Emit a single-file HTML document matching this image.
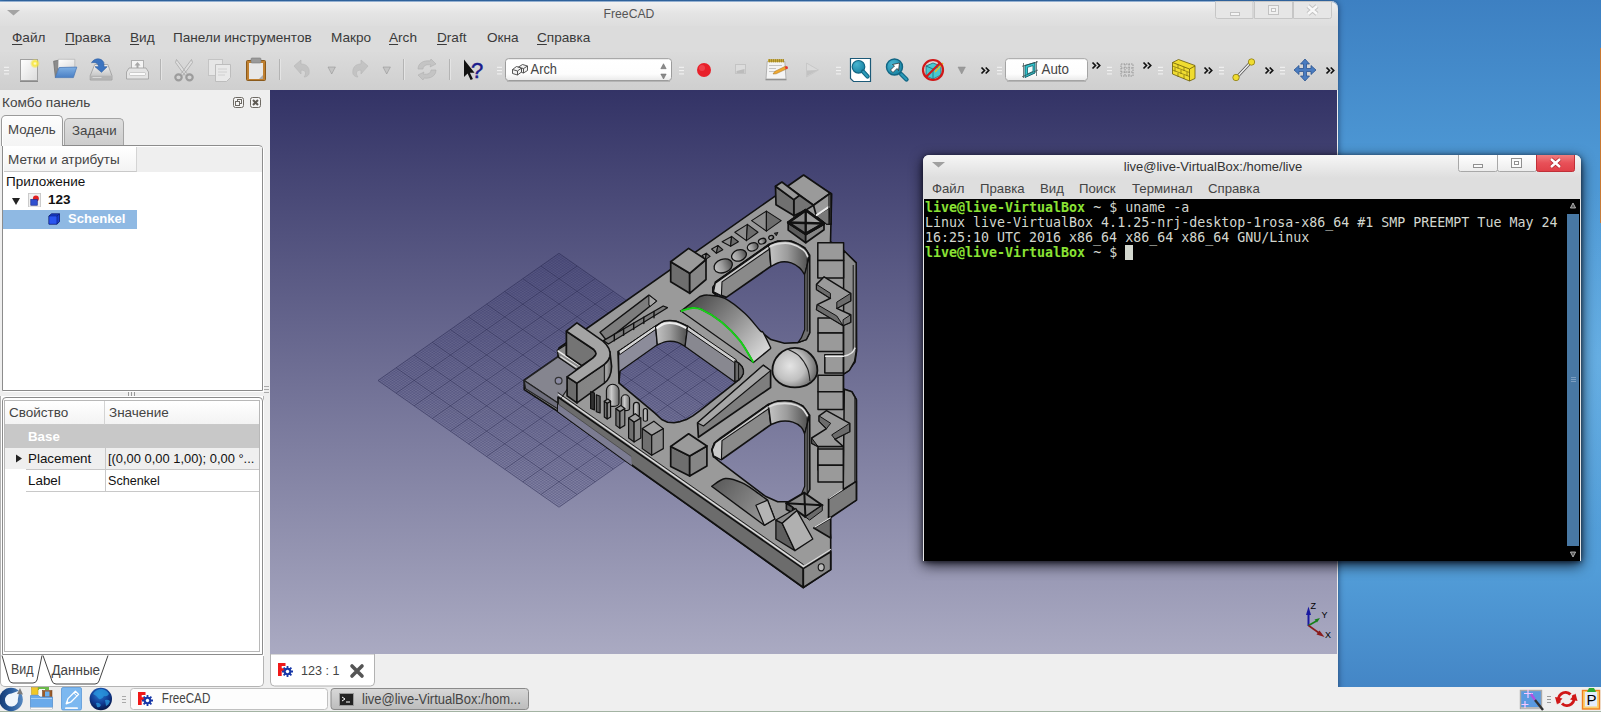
<!DOCTYPE html>
<html lang="ru">
<head>
<meta charset="utf-8">
<title>FreeCAD</title>
<style>
*{box-sizing:border-box;margin:0;padding:0}
html,body{width:1601px;height:712px;overflow:hidden}
body{position:relative;font-family:"Liberation Sans","DejaVu Sans",sans-serif;font-size:13px;color:#333;background:#4a90d2}
.abs{position:absolute}
#desk{position:absolute;left:0;top:0;width:1601px;height:712px;background:linear-gradient(180deg,#3d80c2 0%,#4c96d3 21%,#55a1da 50%,#529dd8 80%,#4486c6 96.5%,#4486c6 100%)}
/* FreeCAD window */
#fc{position:absolute;left:0;top:1px;width:1338px;height:690px;background:#efefef;border-radius:0 7px 0 0;box-shadow:0 0 6px rgba(0,0,30,.55)}
#fctitle{position:absolute;left:0;top:0;width:1338px;height:25px;border-radius:0 7px 0 0;box-shadow:inset 0 1px 0 rgba(70,120,180,.55);background:linear-gradient(180deg,#f2f2f2 0%,#e4e4e4 50%,#dedede 100%)}
#fctitle .t{position:absolute;left:0;width:1258px;top:4.500px;text-align:center;font-size:13.2px;color:#555;transform:scaleX(.925)}
#fcmenu{position:absolute;left:0;top:25px;width:1338px;height:26px;background:#dcdcdc}
#fcmenu span{position:absolute;top:4px;font-size:13.6px;color:#3a3a3a;white-space:nowrap}
#fcmenu u{text-decoration:underline;text-underline-offset:2px}
#fctool{position:absolute;left:0;top:51px;width:1338px;height:38px;background:linear-gradient(180deg,#dbdbdb,#cfcfcf)}
#view{position:absolute;left:270px;top:90px;width:1067px;height:564.400px;background:linear-gradient(180deg,#333366 0%,#aaaac2 100%);overflow:hidden}
#left{position:absolute;left:0;top:90px;width:270px;height:597px;background:#efefef}
#tabbar3d{position:absolute;left:270px;top:654px;width:1068px;height:33px;background:#efefef}
/* taskbar */
#task{position:absolute;left:0;top:687px;width:1601px;height:25px;background:#efefef}
/* terminal */
#term{position:absolute;left:923px;top:155px;width:658px;height:406px;background:#e6e6e6;border-radius:6px 6px 0 0;box-shadow:0 4px 14px rgba(0,0,10,.8),0 1px 5px rgba(0,0,10,.6)}
#termtitle{position:absolute;left:0;top:0;width:658px;height:23px;border-radius:6px 6px 0 0;background:linear-gradient(180deg,#f6f6f6,#dedede)}
#termtitle .t{position:absolute;left:0;width:580px;top:4px;text-align:center;font-size:13px;color:#333}
#termmenu{position:absolute;left:0;top:23px;width:658px;height:21px;background:#dedede}
#termmenu span{position:absolute;top:3px;font-size:13.2px;color:#444;white-space:nowrap}
#termbody{position:absolute;left:1px;top:44px;width:656px;height:362px;padding-left:1px;padding-top:1px;background:#000;font-family:"DejaVu Sans Mono","Liberation Mono",monospace;font-size:13.3px;line-height:15px;color:#d3d7cf;white-space:pre}
#termbody b{color:#8ae234;font-weight:bold}
#termbody .c{color:#d3d7cf}

/* left panel */
#left .ttl{position:absolute;left:2px;top:5px;font-size:13.6px;color:#444}
.dbtn{position:absolute;top:7px;width:11px;height:11px;border:1px solid #6e6a64;border-radius:2.5px;background:#f4f4f4}
.tabm{position:absolute;left:1px;top:25px;width:62px;height:31px;background:linear-gradient(180deg,#fdfdfd,#f4f4f4);border:1px solid #9a9a9a;border-bottom:none;border-radius:5px 5px 0 0;font-size:13.3px;color:#444;padding:6px 0 0 6px;box-shadow:inset 1px 1px 0 #fff}
.tabz{position:absolute;left:64px;top:28px;width:60px;height:27px;background:linear-gradient(180deg,#dedede,#cdcdcd);border:1px solid #a4a4a4;border-bottom:none;border-radius:5px 5px 0 0;font-size:13.3px;color:#444;padding:4px 0 0 7px}
.pane1{position:absolute;left:2px;top:55px;width:261px;height:246px;border:1px solid #8c8c8c;border-radius:0 4px 0 0;background:#fff;box-shadow:inset 1px 1px 0 #fff,1px 1px 0 #fff}
.hdr{position:absolute;background:linear-gradient(180deg,#ffffff,#f3f3f3);font-size:13.5px;color:#444;border-bottom:1px solid #c9c9c9;border-right:1px solid #d4d4d4}
.tree{font-size:13.5px;color:#111}
.pane2{position:absolute;left:0;top:306px;width:264px;height:291px;background:#fff;border:1px solid #b4b4b4;border-top:none;border-radius:0 0 5px 5px}
.pframe{position:absolute;left:2px;top:307px;width:261px;height:258px;border:1px solid #8c8c8c;border-radius:4px 4px 0 0;background:#fff;box-shadow:inset 1px 1px 0 #fff,1px 1px 0 #fff}
.pinner{position:absolute;left:1px;top:2px;width:256px;height:252px;border:1px solid #b8b8b8;background:#fff}
.prow{position:absolute;left:0;width:253px;font-size:13.5px;color:#111}
</style>
</head>
<body>
<div id="desk"><div class="abs" style="left:1600px;top:48px;width:1px;height:175px;background:#c87832"></div><div class="abs" style="left:1500px;top:180px;width:101px;height:360px;background:radial-gradient(ellipse 70px 170px at 100% 50%,rgba(130,195,240,.38),rgba(130,195,240,0))"></div></div>
<div id="fc">
  <div id="fctitle"><div class="t">FreeCAD</div><svg class="abs" style="left:0;top:0" width="1338" height="25" viewBox="0 1 1338 25">
<path d="M7 10h13l-6.500 5.500z" fill="#a4a4a4"/>
<g fill="#e6e6e6" stroke="#c6c6c6"><path d="M1215.500 1.500v15q0 2 2 2h35.500v-17z"/><path d="M1254.500 1.500h38v17h-38z"/><path d="M1293.500 1.500h38v15q0 2-2 2h-36z"/></g>
<rect x="1230.500" y="12.500" width="9" height="3" fill="#f4f4f4" stroke="#c2c2c2"/>
<rect x="1268.500" y="5.500" width="10" height="9" fill="#f0f0f0" stroke="#c2c2c2"/><rect x="1271.500" y="8.500" width="4" height="3" fill="#f8f8f8" stroke="#c2c2c2"/>
<path d="M1308 6l9 8M1317 6l-9 8" stroke="#c2c2c2" stroke-width="4.400"/><path d="M1308 6l9 8M1317 6l-9 8" stroke="#f8f8f8" stroke-width="2.600"/>
</svg></div>
  <div id="fcmenu">
    <span style="left:12px"><u>Ф</u>айл</span>
    <span style="left:65px"><u>П</u>равка</span>
    <span style="left:130px"><u>В</u>ид</span>
    <span style="left:173px">Панели инструментов</span>
    <span style="left:331px">Макро</span>
    <span style="left:389px"><u>A</u>rch</span>
    <span style="left:437px"><u>D</u>raft</span>
    <span style="left:487px">Окна</span>
    <span style="left:537px"><u>С</u>правка</span>
  </div>
  <div id="fctool"><svg class="abs" style="left:0;top:0" width="1338" height="38" viewBox="0 52 1338 38"><g stroke="#f4f4f4" stroke-width="1"><path d="M4 67.300h5M4 70.600h5M4 73.900h5"/></g><defs><linearGradient id="gpap" x1="0" y1="0" x2="1" y2="1"><stop offset="0" stop-color="#fff"/><stop offset="1" stop-color="#dcdcdc"/></linearGradient><radialGradient id="gglow"><stop offset="0" stop-color="#fffbe0"/><stop offset=".45" stop-color="#f8e840"/><stop offset="1" stop-color="#f4e020" stop-opacity="0"/></radialGradient><linearGradient id="gfold" x1="0" y1="0" x2="0" y2="1"><stop offset="0" stop-color="#7fb0e4"/><stop offset="1" stop-color="#4a7fc4"/></linearGradient><linearGradient id="gdrv" x1="0" y1="0" x2="0" y2="1"><stop offset="0" stop-color="#f2f2f2"/><stop offset="1" stop-color="#b8b8b8"/></linearGradient></defs><rect x="20.5" y="59.5" width="17" height="21" fill="url(#gpap)" stroke="#a0a0a0"/><path d="M20 81.5h18" stroke="#8a8a8a"/><circle cx="35" cy="63.5" r="5" fill="url(#gglow)"/><path d="M53.600 61.200l4.600-.9l-.2 8l-2.600 9.300z" fill="#8c8c8c" stroke="#6a6a6a" stroke-width=".7"/><path d="M58.300 59.300h16.500v9h-16.800z" fill="url(#gpap)" stroke="#a8a8a8" stroke-width=".6"/><path d="M59.200 67.500l17.600-.4l-3.400 10.500h-18z" fill="url(#gfold)" stroke="#4a78b8" stroke-width=".8"/><path d="M94.700 64.500h13.100l4.200 11.200v4.300h-21.800v-4.300z" fill="url(#gdrv)" stroke="#9a9a9a" stroke-width=".8"/><path d="M90.600 75.700h21v3.800h-21z" fill="#b4b4b4"/><path d="M92.500 77.500h9" stroke="#d8d8d8" stroke-width="1"/><path d="M91.500 62.800c2.500-4.800 9.500-5.600 12.300-.4l.2 4.300h3.200l-5.700 5.600l-6.500-5.600h3.400c.2-3.400-3.500-5-6.900-3.900z" fill="#3c74c0" stroke="#2c5ca0" stroke-width=".6"/><rect x="131.500" y="60.500" width="12" height="9" fill="#f4f4f4" stroke="#b0b0b0"/><path d="M137.500 62l3 3.500h-2v3h-2v-3h-2z" fill="#a8a8a8"/><path d="M129 68h17l2.500 4v7h-22v-7z" fill="#e4e4e4" stroke="#a4a4a4" stroke-width=".9"/><rect x="129.500" y="72.500" width="16" height="3" rx="1" fill="#fafafa" stroke="#b4b4b4" stroke-width=".6"/><path d="M160.5 59V80" stroke="#b4b4b4"/><path d="M161.5 59V80" stroke="#e4e4e4"/><path d="M176.500 59.500l11.500 15.500h-3.500l-9-12.500zM191.500 59.500l-11.500 15.500h3.500l9-12.500z" fill="#dedede" stroke="#a8a8a8" stroke-width=".8"/><g fill="none" stroke="#9c9c9c" stroke-width="2.200"><ellipse cx="178.500" cy="77.300" rx="3.200" ry="3"/><ellipse cx="189.500" cy="77.300" rx="3.200" ry="3"/></g><rect x="208.500" y="59.500" width="14" height="16" fill="#e6e6e6" stroke="#c4c4c4"/><path d="M215.500 64.500h15v13l-4 4h-11z" fill="#e9e9e9" stroke="#bdbdbd"/><path d="M218 69h9M218 72h9M218 75h7" stroke="#d0d0d0"/><rect x="246.500" y="60.500" width="19" height="20" rx="1" fill="#c08030" stroke="#8a5a1c"/><rect x="249" y="63" width="14" height="16" fill="#e8e8e8"/><rect x="251" y="58" width="10" height="5" rx="1" fill="#9a9a9a" stroke="#7a7a7a" stroke-width=".6"/><path d="M263 75v4h-4z" fill="#aaa"/><path d="M279.5 59V80" stroke="#b4b4b4"/><path d="M280.5 59V80" stroke="#e4e4e4"/><g fill="#c2c2c2" stroke="#b4b4b4" stroke-width=".6" opacity=".9"><path d="M294 66l7-6v4c6 0 9 4 8 10c-1 2-3 3-5 3c2-2 3-7-3-7v4z"/><path d="M368 66l-7-6v4c-6 0-9 4-8 10c1 2 3 3 5 3c-2-2-3-7 3-7v4z"/></g><path d="M328.0 67.0h7.400l-3.700 7z" fill="#c4c4c4" stroke="#8c8c8c" stroke-width=".5"/><path d="M383.0 67.0h7.400l-3.700 7z" fill="#c4c4c4" stroke="#8c8c8c" stroke-width=".5"/><path d="M403.5 59V80" stroke="#b4b4b4"/><path d="M404.5 59V80" stroke="#e4e4e4"/><g fill="#c4c4c4" stroke="#b0b0b0" stroke-width=".6"><path d="M418 69c0-6 6-9 12-8l1-2l5 5l-6 3l1-2c-5-1-8 1-8 4z"/><path d="M436 70c0 6-6 9-12 8l-1 2l-5-5l6-3l-1 2c5 1 8-1 8-4z"/></g><path d="M449.5 59V80" stroke="#b4b4b4"/><path d="M450.5 59V80" stroke="#e4e4e4"/><path d="M464 59.500v17.500l3.600-3.400l3 6.400l2.300-1l-3-6.300h4.600z" fill="#111"/><text x="471" y="78" font-size="22" fill="#1c1c8c" stroke="#1c1c8c" stroke-width=".5" font-family="Liberation Sans, sans-serif">?</text><g stroke="#f4f4f4" stroke-width="1"><path d="M497 67.300h5M497 70.600h5M497 73.900h5"/></g><defs><linearGradient id="gcmb" x1="0" y1="0" x2="0" y2="1"><stop offset="0" stop-color="#fff"/><stop offset=".7" stop-color="#fdfdfd"/><stop offset="1" stop-color="#eaeaea"/></linearGradient></defs><rect x="505.500" y="58.700" width="166" height="21.800" rx="3" fill="url(#gcmb)" stroke="#9c9c9c"/><path d="M507 81.500h163" stroke="#b4b4b4"/><g fill="#f2f2f2" stroke="#444" stroke-width=".9" stroke-linejoin="round"><path d="M512.500 69.500l4-3l5 1.500v4l-4 3l-5-1.500z"/><path d="M512.500 69.500l5 1.500l4-3M517.500 71v4" fill="none"/><path d="M518.500 67l4-2.500l5 1.500v4.500l-4 2.500l-2-.6v-4.400z"/><path d="M521.500 68l2 .6l4-2.600M523.500 68.600v4.400" fill="none"/></g><text x="530.600" y="74.300" font-size="14" fill="#444" textLength="26.400" lengthAdjust="spacingAndGlyphs" font-family="Liberation Sans, sans-serif">Arch</text><path d="M660.800 68.700h5.400l-2.700-5z M660.800 74h5.400l-2.700 5z" fill="#8a8a8a" stroke="#666" stroke-width=".5"/><g stroke="#f4f4f4" stroke-width="1"><path d="M679 67.300h5M679 70.600h5M679 73.900h5"/></g><circle cx="704" cy="70" r="7" fill="#e8202a"/><circle cx="702" cy="68" r="3" fill="#f25058" opacity=".7"/><rect x="735.500" y="64.500" width="10" height="9" fill="#dcdcdc" stroke="#c4c4c4"/><path d="M736.500 71l8-2v4h-8z" fill="#bcbcbc"/><path d="M767.200 61.500h17.600l1.200 17.500h-20z" fill="#f4f4f4" stroke="#a4a4a4" stroke-width=".8"/><path d="M768 59.200h16v3h-16z" fill="#c8a838"/><path d="M769.500 59v3.400M771.500 59v3.400M773.500 59v3.400M775.500 59v3.400M777.500 59v3.400M779.500 59v3.400M781.500 59v3.400M783.500 59v3.400" stroke="#8a7420" stroke-width=".6"/><path d="M769 65.500h13M769 68.500h7M769 71.500h9" stroke="#c4c4c4"/><path d="M773 74l1.800-2.600l11-5.400l1.400 2.600l-11 5.200z" fill="#f0a830" stroke="#9a6a1c" stroke-width=".5"/><circle cx="786.500" cy="67.700" r="1.400" fill="#e83030"/><path d="M765.500 79.700h21" stroke="#8c8c8c" stroke-width="1.200"/><path d="M806.500 63l12 7l-12 7z" fill="#dadada" stroke="#c4c4c4" stroke-width=".8"/><path d="M807 70.500l11 -.5l-11 6z" fill="#c2c2c2"/><g stroke="#f4f4f4" stroke-width="1"><path d="M836 67.300h5M836 70.600h5M836 73.900h5"/></g><path d="M850.500 58.500h20v23h-17l-3-3z" fill="#fff" stroke="#1c5a78" stroke-width="1.200"/><defs><radialGradient id="glens" cx=".35" cy=".3" r=".8"><stop offset="0" stop-color="#48b4d0"/><stop offset="1" stop-color="#1480a0"/></radialGradient></defs><circle cx="858.500" cy="66.800" r="6.300" fill="url(#glens)" stroke="#126684" stroke-width="1.200"/><path d="M863 71.500l4.600 5" stroke="#126684" stroke-width="4.200" stroke-linecap="round"/><path d="M863.300 71.800l4.200 4.600" stroke="#2a9ab8" stroke-width="2.200" stroke-linecap="round"/><circle cx="894.500" cy="67" r="8" fill="url(#glens)" stroke="#126684" stroke-width="1.400"/><path d="M901 74l5.500 5.500" stroke="#126684" stroke-width="4.400" stroke-linecap="round"/><path d="M901.300 74.300l5 5" stroke="#2a9ab8" stroke-width="2.200" stroke-linecap="round"/><path d="M899.500 63l-7 1.500l2 1.500l-4 4l2.500 2.500l4-4l1.500 2z" fill="#fff" stroke="#222" stroke-width=".7"/><path d="M926 66l7-3l8 3v9l-8 4l-7-3z" fill="#48c8d0" stroke="#1a6a78" stroke-width=".8"/><path d="M926 66l7 3l8-3M933 69v10" fill="none" stroke="#1a6a78" stroke-width=".8"/><path d="M935 72l8-9" stroke="#e8c020" stroke-width="1.500"/><circle cx="933" cy="70" r="10" fill="none" stroke="#d01818" stroke-width="2.200"/><path d="M940 63L926 77" stroke="#d01818" stroke-width="2.200"/><path d="M958.0 67.0h7.400l-3.700 7z" fill="#9a9a9a" stroke="#8c8c8c" stroke-width=".5"/><path d="M981.5 67.5l3 3l-3 3M985.7 67.5l3 3l-3 3" fill="none" stroke="#111" stroke-width="1.700"/><g stroke="#f4f4f4" stroke-width="1"><path d="M997 67.300h5M997 70.600h5M997 73.900h5"/></g><rect x="1005.500" y="58.700" width="82" height="21.800" rx="3" fill="url(#gcmb)" stroke="#a4a4a4"/><path d="M1007 81.500h79" stroke="#b4b4b4"/><path d="M1025 65.500l10-3v10.500l-10 4.500z" fill="#30c8d0" stroke="#14606c" stroke-width="1"/><path d="M1027.500 67.300l5.500-1.700v5.800l-5.500 2.500z" fill="#f4fcfc" stroke="#14606c" stroke-width=".8"/><path d="M1023.500 63v15M1036.500 61v15M1022 66.300l16-4.600M1022 76.800l16-6.800" stroke="#3a4a4c" stroke-width=".7" fill="none"/><text x="1041.500" y="74.300" font-size="14" fill="#444" textLength="27.500" lengthAdjust="spacingAndGlyphs" font-family="Liberation Sans, sans-serif">Auto</text><path d="M1092.5 62.5l3 3l-3 3M1096.7 62.5l3 3l-3 3" fill="none" stroke="#111" stroke-width="1.700"/><g stroke="#f4f4f4" stroke-width="1"><path d="M1107 67.300h5M1107 70.600h5M1107 73.900h5"/></g><g fill="none" stroke="#909090" stroke-width=".9" stroke-dasharray="1.500 1"><rect x="1121" y="64" width="12" height="12"/><path d="M1125 64v12M1129 64v12M1121 68h12M1121 72h12"/></g><path d="M1143.5 62.5l3 3l-3 3M1147.7 62.5l3 3l-3 3" fill="none" stroke="#111" stroke-width="1.700"/><g stroke="#f4f4f4" stroke-width="1"><path d="M1158 67.300h5M1158 70.600h5M1158 73.900h5"/></g><g stroke="#6a5c08" stroke-width=".8"><path d="M1172.500 62.500l6-3l16.500 6v13l-5.500 2.500l-17-7z" fill="#f0dc30"/><path d="M1172.500 62.500l17 6.500l5.500-3M1189.500 69v12" fill="none"/><path d="M1172.500 66l17 6.500M1172.500 70l17 6.500M1178 64.500v4M1184 67v4M1175 67.500v4M1181 70v4M1187 72v4M1178 73v4M1184 75v4" fill="none" stroke-width=".6"/></g><path d="M1204.5 67.5l3 3l-3 3M1208.7 67.5l3 3l-3 3" fill="none" stroke="#111" stroke-width="1.700"/><g stroke="#f4f4f4" stroke-width="1"><path d="M1219 67.300h5M1219 70.600h5M1219 73.900h5"/></g><path d="M1237 77l14-15" stroke="#555" stroke-width="3"/><path d="M1237 77l14-15" stroke="#f4f4f4" stroke-width="1.400"/><circle cx="1236" cy="77.500" r="3.200" fill="#f0dc30" stroke="#8a7a10" stroke-width=".8"/><circle cx="1251.500" cy="62" r="3.200" fill="#f0dc30" stroke="#8a7a10" stroke-width=".8"/><path d="M1265.5 67.5l3 3l-3 3M1269.7 67.5l3 3l-3 3" fill="none" stroke="#111" stroke-width="1.700"/><g stroke="#f4f4f4" stroke-width="1"><path d="M1280 67.300h5M1280 70.600h5M1280 73.900h5"/></g><path d="M1305 59l4.500 5h-3v4.500h4.500v-3l5 4.500l-5 4.500v-3h-4.500v4.500h3l-4.500 5l-4.500-5h3v-4.500h-4.500v3l-5-4.500l5-4.500v3h4.500v-4.500h-3z" fill="#4a7cc0" stroke="#2c5490" stroke-width=".8"/><path d="M1326.5 67.5l3 3l-3 3M1330.7 67.5l3 3l-3 3" fill="none" stroke="#111" stroke-width="1.700"/></svg></div>
</div>
<div id="left">
  <div class="ttl">Комбо панель</div>
  <div class="dbtn" style="left:233px"><svg width="9" height="9" viewBox="0 0 9 9" style="position:absolute;left:0;top:0"><rect x="3.5" y="1.5" width="4" height="4" fill="none" stroke="#6e6a64"/><rect x="1.5" y="3.5" width="4" height="4" fill="#f4f4f4" stroke="#6e6a64"/></svg></div>
  <div class="dbtn" style="left:250px"><svg width="9" height="9" viewBox="0 0 9 9" style="position:absolute;left:0;top:0"><path d="M2 2L7 7M7 2L2 7" stroke="#5e5a54" stroke-width="2"/></svg></div>
  <div class="tabz">Задачи</div>
  <div class="pane1">
    <div class="hdr" style="left:1px;top:1px;width:133px;height:25px;padding:5px 0 0 4px">Метки и атрибуты</div>
    <div class="abs" style="left:134px;top:1px;width:125px;height:25px;background:#efefef"></div>
    <div class="tree">
      <div class="abs" style="left:3px;top:28px">Приложение</div>
      <svg class="abs" style="left:8px;top:50px" width="10" height="10" viewBox="0 0 10 10"><path d="M1 2H9L5 9Z" fill="#222"/></svg>
      <svg class="abs" style="left:25px;top:46.500px" width="13" height="14.500" viewBox="0 0 14 16" preserveAspectRatio="none"><rect x=".5" y=".5" width="13" height="15" fill="#f0f0f0" stroke="#c8c8c8"/><circle cx="8.5" cy="6" r="3.2" fill="#e02020"/><rect x="3" y="7" width="7" height="6.5" fill="#3050d0" stroke="#18288a" stroke-width=".7"/></svg>
      <div class="abs" style="left:45px;top:46px;font-weight:bold">123</div>
      <div class="abs" style="left:0;top:64px;width:134px;height:18.600px;background:#8fb9e3"></div>
      <svg class="abs" style="left:44.500px;top:67px" width="12.500" height="12" viewBox="0 0 14 14" preserveAspectRatio="none"><path d="M1 3.5L4 1H13V10L10 13H1Z" fill="#1a3fd0" stroke="#0c1c70" stroke-width="1"/><path d="M1 3.5H10V13M10 3.5L13 1" fill="none" stroke="#0c1c70" stroke-width=".8"/><rect x="1.5" y="4" width="8" height="8.5" fill="#2a55f0"/></svg>
      <div class="abs" style="left:65px;top:65px;font-weight:bold;color:#fff;transform:scaleX(.97);transform-origin:0 0">Schenkel</div>
    </div>
  </div>
  <div class="tabm">Модель</div>
  <div class="abs" style="left:128px;top:302px;width:9px;height:4px;background:repeating-linear-gradient(90deg,#999 0 1px,transparent 1px 3px)"></div>
  <div class="pane2"></div>
  <div class="pframe"><div class="pinner">
    <div class="hdr" style="left:0;top:0;width:100px;height:24px;padding:4px 0 0 4px">Свойство</div>
    <div class="hdr" style="left:100px;top:0;width:154px;height:24px;padding:4px 0 0 4px;border-right:none">Значение</div>
    <div class="abs" style="left:0;top:24px;width:254px;height:23px;background:#c8c8c8"></div>
    <div class="abs" style="left:23px;top:28px;font-size:13.3px;font-weight:bold;color:#fff">Base</div>
    <div class="abs" style="left:0;top:47px;width:254px;height:21px;background:#efefef"></div>
    <svg class="abs" style="left:10px;top:53px" width="8" height="9" viewBox="0 0 8 9"><path d="M1 0.5L7 4.5L1 8.5Z" fill="#222"/></svg>
    <div class="abs" style="left:23px;top:50px;font-size:13.4px;color:#111">Placement</div>
    <div class="abs" style="left:103px;top:50px;font-size:12.9px;color:#111;white-space:nowrap">[(0,00 0,00 1,00); 0,00 °...</div>
    <div class="abs" style="left:23px;top:72px;font-size:13.4px;color:#111">Label</div>
    <div class="abs" style="left:103px;top:72px;font-size:13.4px;color:#111;transform:scaleX(.94);transform-origin:0 0">Schenkel</div>
    <div class="abs" style="left:21px;top:68px;width:233px;height:1px;background:#c8c8c8"></div>
    <div class="abs" style="left:21px;top:90px;width:233px;height:1px;background:#c8c8c8"></div>
    <div class="abs" style="left:100px;top:47px;width:1px;height:44px;background:#c8c8c8"></div>
  </div></div>
  <svg class="abs" style="left:0;top:564px" width="120" height="32" viewBox="0 0 120 32">
    <path d="M2 1.5L9 26Q10 29 13 29H33Q36 29 37 26L42 1.5" fill="#fff" stroke="#444" stroke-width="1"/>
    <path d="M43 1.5L52 27Q53 30 56 30H95Q98 30 99 27L108 1.5" fill="#fff" stroke="#444" stroke-width="1"/>
    <text x="11" y="20" font-size="14" fill="#444" textLength="22.500" lengthAdjust="spacingAndGlyphs" font-family="Liberation Sans, sans-serif">Вид</text>
    <text x="51.500" y="21" font-size="14" fill="#444" textLength="48.500" lengthAdjust="spacingAndGlyphs" font-family="Liberation Sans, sans-serif">Данные</text>
  </svg>
  <div class="abs" style="left:264px;top:296px;width:5px;height:7px;background:repeating-linear-gradient(180deg,#aaa 0 1px,transparent 1px 3px)"></div>
</div>
<div id="view"><svg class="abs" style="left:0;top:0" width="1067" height="564" viewBox="270 90 1067 564"><path d="M559 253.3L378 380.5L559.0 507.2L740 380Z" fill="#20205a" fill-opacity=".06"/><path d="M557.2 254.6L738.2 381.3M560.8 254.6L379.8 381.8M555.4 255.8L736.4 382.5M562.6 255.8L381.6 383.0M553.6 257.1L734.6 383.8M564.4 257.1L383.4 384.3M551.8 258.4L732.8 385.1M566.2 258.4L385.2 385.6M550.0 259.7L731.0 386.4M568.0 259.6L387.1 386.8M548.1 260.9L729.1 387.6M569.9 260.9L388.9 388.1M546.3 262.2L727.3 388.9M571.7 262.2L390.7 389.4M544.5 263.5L725.5 390.2M573.5 263.4L392.5 390.6M542.7 264.7L723.7 391.4M575.3 264.7L394.3 391.9M539.1 267.3L720.1 394.0M578.9 267.2L397.9 394.4M537.3 268.6L718.3 395.3M580.7 268.5L399.7 395.7M535.5 269.8L716.5 396.5M582.5 269.8L401.5 397.0M533.7 271.1L714.7 397.8M584.3 271.0L403.3 398.2M531.9 272.4L712.9 399.1M586.1 272.3L405.1 399.5M530.0 273.7L711.0 400.4M588.0 273.6L407.0 400.8M528.2 274.9L709.2 401.6M589.8 274.8L408.8 402.0M526.4 276.2L707.4 402.9M591.6 276.1L410.6 403.3M524.6 277.5L705.6 404.2M593.4 277.4L412.4 404.6M521.0 280.0L702.0 406.7M597.0 279.9L416.0 407.1M519.2 281.3L700.2 408.0M598.8 281.2L417.8 408.4M517.4 282.6L698.4 409.3M600.6 282.4L419.6 409.6M515.6 283.8L696.6 410.5M602.4 283.7L421.4 410.9M513.8 285.1L694.8 411.8M604.2 285.0L423.2 412.2M511.9 286.4L692.9 413.1M606.1 286.2L425.1 413.4M510.1 287.6L691.1 414.3M607.9 287.5L426.9 414.7M508.3 288.9L689.3 415.6M609.7 288.8L428.7 416.0M506.5 290.2L687.5 416.9M611.5 290.0L430.5 417.2M502.9 292.7L683.9 419.4M615.1 292.6L434.1 419.8M501.1 294.0L682.1 420.7M616.9 293.8L435.9 421.0M499.3 295.3L680.3 422.0M618.7 295.1L437.7 422.3M497.5 296.5L678.5 423.2M620.5 296.4L439.5 423.6M495.6 297.8L676.6 424.5M622.4 297.6L441.4 424.8M493.8 299.1L674.8 425.8M624.2 298.9L443.2 426.1M492.0 300.4L673.0 427.1M626.0 300.2L445.0 427.4M490.2 301.6L671.2 428.3M627.8 301.4L446.8 428.6M488.4 302.9L669.4 429.6M629.6 302.7L448.6 429.9M484.8 305.5L665.8 432.2M633.2 305.2L452.2 432.4M483.0 306.7L664.0 433.4M635.0 306.5L454.0 433.7M481.2 308.0L662.2 434.7M636.8 307.8L455.8 435.0M479.4 309.3L660.4 436.0M638.6 309.0L457.6 436.2M477.6 310.5L658.5 437.2M640.5 310.3L459.4 437.5M475.7 311.8L656.7 438.5M642.3 311.6L461.3 438.8M473.9 313.1L654.9 439.8M644.1 312.8L463.1 440.0M472.1 314.4L653.1 441.1M645.9 314.1L464.9 441.3M470.3 315.6L651.3 442.3M647.7 315.4L466.7 442.6M466.7 318.2L647.7 444.9M651.3 317.9L470.3 445.1M464.9 319.4L645.9 446.1M653.1 319.2L472.1 446.4M463.1 320.7L644.1 447.4M654.9 320.5L473.9 447.7M461.3 322.0L642.3 448.7M656.7 321.7L475.7 448.9M459.4 323.3L640.5 450.0M658.5 323.0L477.6 450.2M457.6 324.5L638.6 451.2M660.4 324.3L479.4 451.5M455.8 325.8L636.8 452.5M662.2 325.5L481.2 452.7M454.0 327.1L635.0 453.8M664.0 326.8L483.0 454.0M452.2 328.3L633.2 455.0M665.8 328.1L484.8 455.3M448.6 330.9L629.6 457.6M669.4 330.6L488.4 457.8M446.8 332.2L627.8 458.9M671.2 331.9L490.2 459.1M445.0 333.4L626.0 460.1M673.0 333.1L492.0 460.3M443.2 334.7L624.2 461.4M674.8 334.4L493.8 461.6M441.4 336.0L622.4 462.7M676.6 335.7L495.6 462.9M439.5 337.3L620.5 464.0M678.5 336.9L497.5 464.1M437.7 338.5L618.7 465.2M680.3 338.2L499.3 465.4M435.9 339.8L616.9 466.5M682.1 339.5L501.1 466.7M434.1 341.1L615.1 467.8M683.9 340.7L502.9 467.9M430.5 343.6L611.5 470.3M687.5 343.3L506.5 470.5M428.7 344.9L609.7 471.6M689.3 344.5L508.3 471.7M426.9 346.2L607.9 472.9M691.1 345.8L510.1 473.0M425.1 347.4L606.1 474.1M692.9 347.1L511.9 474.3M423.2 348.7L604.2 475.4M694.8 348.3L513.8 475.5M421.4 350.0L602.4 476.7M696.6 349.6L515.6 476.8M419.6 351.2L600.6 477.9M698.4 350.9L517.4 478.1M417.8 352.5L598.8 479.2M700.2 352.1L519.2 479.3M416.0 353.8L597.0 480.5M702.0 353.4L521.0 480.6M412.4 356.3L593.4 483.0M705.6 355.9L524.6 483.1M410.6 357.6L591.6 484.3M707.4 357.2L526.4 484.4M408.8 358.9L589.8 485.6M709.2 358.5L528.2 485.7M407.0 360.1L588.0 486.8M711.0 359.7L530.0 486.9M405.1 361.4L586.1 488.1M712.9 361.0L531.9 488.2M403.3 362.7L584.3 489.4M714.7 362.3L533.7 489.5M401.5 364.0L582.5 490.7M716.5 363.5L535.5 490.7M399.7 365.2L580.7 491.9M718.3 364.8L537.3 492.0M397.9 366.5L578.9 493.2M720.1 366.1L539.1 493.3M394.3 369.1L575.3 495.8M723.7 368.6L542.7 495.8M392.5 370.3L573.5 497.0M725.5 369.9L544.5 497.1M390.7 371.6L571.7 498.3M727.3 371.1L546.3 498.3M388.9 372.9L569.9 499.6M729.1 372.4L548.1 499.6M387.1 374.1L568.0 500.8M731.0 373.7L550.0 500.9M385.2 375.4L566.2 502.1M732.8 374.9L551.8 502.1M383.4 376.7L564.4 503.4M734.6 376.2L553.6 503.4M381.6 378.0L562.6 504.7M736.4 377.5L555.4 504.7M379.8 379.2L560.8 505.9M738.2 378.7L557.2 505.9" stroke="#26265c" stroke-opacity=".27" stroke-width=".7" fill="none"/><path d="M559.0 253.3L740.0 380.0M559.0 253.3L378.0 380.5M540.9 266.0L721.9 392.7M577.1 266.0L396.1 393.2M522.8 278.7L703.8 405.4M595.2 278.6L414.2 405.8M504.7 291.5L685.7 418.2M613.3 291.3L432.3 418.5M486.6 304.2L667.6 430.9M631.4 304.0L450.4 431.2M468.5 316.9L649.5 443.6M649.5 316.6L468.5 443.9M450.4 329.6L631.4 456.3M667.6 329.3L486.6 456.5M432.3 342.3L613.3 469.0M685.7 342.0L504.7 469.2M414.2 355.1L595.2 481.8M703.8 354.7L522.8 481.9M396.1 367.8L577.1 494.5M721.9 367.3L540.9 494.5M378.0 380.5L559.0 507.2M740.0 380.0L559.0 507.2" stroke="#24244e" stroke-opacity=".5" stroke-width="1" fill="none"/><defs>
<linearGradient id="gcurv" x1="0" y1="0" x2="1" y2="0"><stop offset="0" stop-color="#c4c4c4"/><stop offset=".45" stop-color="#9c9c9c"/><stop offset="1" stop-color="#4c4c4c"/></linearGradient>
<linearGradient id="garch" gradientUnits="userSpaceOnUse" x1="700" y1="296" x2="762" y2="352"><stop offset="0" stop-color="#505050"/><stop offset=".5" stop-color="#8e8e8e"/><stop offset="1" stop-color="#d4d4d4"/></linearGradient>
<radialGradient id="gdome" gradientUnits="userSpaceOnUse" cx="790" cy="366" r="27"><stop offset="0" stop-color="#e4e4e4"/><stop offset=".55" stop-color="#c0c0c0"/><stop offset="1" stop-color="#6a6a6a"/></radialGradient>
<linearGradient id="gramp" gradientUnits="userSpaceOnUse" x1="715" y1="480" x2="770" y2="520"><stop offset="0" stop-color="#5a5a5a"/><stop offset="1" stop-color="#9a9a9a"/></linearGradient>
<linearGradient id="gbent" gradientUnits="userSpaceOnUse" x1="577" y1="0" x2="612" y2="0"><stop offset="0" stop-color="#848484"/><stop offset=".72" stop-color="#868686"/><stop offset=".85" stop-color="#a4a4a4"/><stop offset="1" stop-color="#5c5c5c"/></linearGradient>
<linearGradient id="gcyl" x1="0" y1="0" x2="1" y2="0"><stop offset="0" stop-color="#7c7c7c"/><stop offset=".4" stop-color="#cacaca"/><stop offset="1" stop-color="#6a6a6a"/></linearGradient></defs>
<path d="M524.2 380.1 L557.9 356.9 L559 348 L774.8 196.3 L803.3 176.5 L831.7 194 L830.5 241.7 L843 250.3 L856.2 262.9 L856.6 351 L855 362 L848 371 L843.5 374 L843.5 389 L852 392 L856.5 400 L856.4 481 L856.4 500 L828.6 517 L830.7 538 L830.7 569.6 L803.3 587.5 L700 513.5 L621.2 457.5 L558 411.5 L524.2 389.6Z M712.8 292.4 L712.8 287.3 L717.8 280.6 L769.2 244.3 L777.7 241.0 L791.2 241.0 L804.7 247.7 L809.7 255.3 L809.7 332.8 L806.3 339.6 L797.9 342.6 L784.4 343.3 L770.9 339.6 L764.2 334.5Z M618.5 351.5 L655.6 326.3 L664.1 321.2 L675.9 321.2 L687.7 326.3 L734.9 360.8 L739.1 363.5 L742.1 366.7 L743.3 370.1 L743.3 373.5 L741.6 376.8 L739.1 379.7 L700.0 410.6 L692.8 415.9 L686.5 419.5 L680.2 421.6 L673.9 422.7 L667.6 422.2 L661.7 419.5 L654.9 413.2 L619.1 383.2 L618.0 351.6Z M711.9 449.9 L714.4 443.2 L720.3 438.1 L768.4 404.4 L777.7 401.0 L791.2 401.0 L803.0 406.1 L809.7 415.3 L809.7 489.5 L806.3 495.4 L791.2 501.7 L777.7 501.7 L765.9 496.6 L720.3 462.2 L713.6 456.7Z" fill="#9a9a9a" fill-rule="evenodd" stroke="#111" stroke-width="1.6" stroke-linejoin="round"/>
<path d="M524.2 380.4 L557.9 356.9 L580 371 L557.9 402.9Z" fill="#85858f" stroke="#222" stroke-width="1.2" stroke-linejoin="round" />
<path d="M524.2 380.4 L557.9 402.9 L558 409 L525.6 388.8Z" fill="#6e6e7c" stroke="#222" stroke-width="1.2" stroke-linejoin="round" />
<path d="M558 397 L803.3 568.6 L803.3 587.5 L700 513.5 L621.2 457.5 L558 411.5Z" fill="#6c6c6c" stroke="#111" stroke-width="1.7" stroke-linejoin="round" />
<path d="M558 404 L631 456.2 L632 465.5 L558 411.5Z" fill="#7c7c92" stroke="none" stroke-width="0" stroke-linejoin="round" />
<path d="M558 404 L631 456.2" fill="none" stroke="#444" stroke-width="0.8" stroke-linejoin="round" stroke-linecap="round" />
<path d="M558.5 394.6 L803.3 566.2" fill="none" stroke="#e4e4e4" stroke-width="1.1" stroke-linejoin="round" stroke-linecap="round" />
<path d="M558 392.6 L803.3 564.4" fill="none" stroke="#222" stroke-width="1" stroke-linejoin="round" stroke-linecap="round" />
<path d="M803.3 568.6 L830.7 551.7 L830.7 569.6 L803.3 587.5Z" fill="#8a8a8a" stroke="#111" stroke-width="1.7" stroke-linejoin="round" />
<path d="M803.3 566.6 L830.7 549.4" fill="none" stroke="#e0e0e0" stroke-width="1.1" stroke-linejoin="round" stroke-linecap="round" />
<ellipse cx="821.2" cy="567.3" rx="3" ry="3.6" fill="#b8b8b8" stroke="#111" stroke-width="1.1"/>
<path d="M828.6 499.0 L856.4 481.1 L856.4 500.1 L831.1 517.3 L828.6 517.3Z" fill="#7c7c7c" stroke="#111" stroke-width="1.7" stroke-linejoin="round" />
<path d="M829.0 498.4 L856.4 480.2" fill="none" stroke="#e0e0e0" stroke-width="1.1" stroke-linejoin="round" stroke-linecap="round" />
<path d="M813.8 527.9 L830.7 518.0 L830.7 538.0Z" fill="#6a6a6a" stroke="#111" stroke-width="1.7" stroke-linejoin="round" />
<path d="M814.9 527.0 L830.3 517.8" fill="none" stroke="#e4e4e4" stroke-width="1.1" stroke-linejoin="round" stroke-linecap="round" />
<path d="M715.3 282.3 L769.2 244.3 L770.9 266.3 L726.3 297.4 L713.6 292.4Z" fill="#8a8a8a" stroke="#111" stroke-width="1.7" stroke-linejoin="round" />
<path d="M715.3 283.3 L769.2 245.2 L769.2 249.2 L722.0 281.9 L721.4 295.8 L713.6 291.7Z" fill="#cacaca" stroke="#111" stroke-width="1.1" stroke-linejoin="round" />
<path d="M769.2 244.8 C770.6 244.2 774.0 242.1 777.7 241.5 C781.4 240.9 786.7 240.4 791.2 241.5 C795.7 242.6 801.7 245.8 804.7 248.2 C807.7 250.6 808.6 254.8 809.4 256.1 L804.7 274.7 804.7 274.7 C803.9 273.6 801.9 269.9 799.6 267.9 C797.4 265.9 794.3 263.9 791.2 262.9 C788.1 261.9 784.4 261.4 781.0 262.0 C777.6 262.6 772.6 265.6 770.9 266.3 Z" fill="url(#gcurv)" stroke="#111" stroke-width="1.4"/>
<path d="M769.2 246.9 C770.6 246.4 774.0 244.3 777.7 243.8 C781.4 243.3 786.9 242.8 791.2 243.8 C795.5 244.8 800.5 247.7 803.3 249.9 C806.1 252.1 807.2 255.8 808.0 257.0" fill="none" stroke="#dcdcdc" stroke-width="1.7"/>
<path d="M804.7 274.7 L809.4 256.1 L809.7 332.8 L806.3 339.6 L797.9 342.6 L801.3 337.9 L804.7 329.5Z" fill="#707070" stroke="#111" stroke-width="1.2" stroke-linejoin="round" />
<path d="M807.2 258.7 L807.2 331.2" fill="none" stroke="#111" stroke-width="1" stroke-linejoin="round" stroke-linecap="round" />
<path d="M714.4 443.2 L768.4 404.4 L770.9 424.6 L722.0 459.2 L713.6 456.7 L711.9 449.9Z" fill="#8a8a8a" stroke="#111" stroke-width="1.7" stroke-linejoin="round" />
<path d="M715.3 442.8 L768.4 404.9 L768.4 408.9 L722.0 440.6 L721.4 459.9 L713.6 455.8 L712.3 449.9Z" fill="#cacaca" stroke="#111" stroke-width="1.1" stroke-linejoin="round" />
<path d="M768.4 404.7 C770.0 404.1 773.9 401.9 777.7 401.4 C781.5 400.8 787.0 400.6 791.2 401.4 C795.4 402.2 800.0 404.0 803.0 406.4 C806.0 408.8 808.3 414.1 809.4 415.7 L804.7 433.9 804.7 433.9 C804.1 432.8 803.3 429.2 801.3 427.2 C799.3 425.2 796.2 423.1 792.8 422.1 C789.4 421.1 784.6 420.9 781.0 421.3 C777.4 421.7 772.6 424.1 770.9 424.6 Z" fill="url(#gcurv)" stroke="#111" stroke-width="1.4"/>
<path d="M768.4 406.9 C770.0 406.4 773.9 404.4 777.7 403.9 C781.5 403.4 787.2 403.2 791.2 403.9 C795.2 404.6 799.2 406.2 802.0 408.3 C804.8 410.4 806.8 414.9 807.7 416.2" fill="none" stroke="#dcdcdc" stroke-width="1.7"/>
<path d="M804.7 433.9 L809.4 415.7 L809.7 489.5 L806.3 495.4 L791.2 501.7 L801.3 494.6 L804.7 486.2Z" fill="#707070" stroke="#111" stroke-width="1.2" stroke-linejoin="round" />
<path d="M807.2 417.9 L807.2 492.9" fill="none" stroke="#111" stroke-width="1" stroke-linejoin="round" stroke-linecap="round" />
<path d="M618.5 351.5 L655.6 326.3 L657.3 344.8 L620.2 370.9 L619.1 383.2Z" fill="#8c8c9a" stroke="#111" stroke-width="1.2" stroke-linejoin="round" />
<path d="M618.9 351.0 L655.6 325.7 L656.1 329.1 L619.6 354.7Z" fill="#d4d4d4" stroke="#111" stroke-width="1" stroke-linejoin="round" />
<path d="M655.6 326.3 C657.0 325.4 660.7 322.1 664.1 321.2 C667.5 320.3 672.0 320.3 675.9 321.2 C679.8 322.1 685.7 325.4 687.7 326.3 L685.1 346.5 685.1 346.5 C683.9 345.8 680.6 343.2 677.6 342.3 C674.6 341.4 670.8 341.0 667.4 341.4 C664.0 341.8 659.0 344.2 657.3 344.8 Z" fill="url(#gcurv)" stroke="#111" stroke-width="1.4"/>
<path d="M656.5 328.4 C657.8 327.6 661.2 324.4 664.4 323.6 C667.6 322.8 672.2 322.9 675.9 323.6 C679.5 324.4 684.6 327.4 686.3 328.1" fill="none" stroke="#ececec" stroke-width="2.2"/>
<path d="M687.7 326.3 L734.9 360.8 L734.9 381.9 L685.1 346.5Z" fill="#888890" stroke="#111" stroke-width="1.2" stroke-linejoin="round" />
<path d="M687.7 326.3 L736.6 360.0 L735.2 363.2 L687.0 330.1Z" fill="#cecece" stroke="#111" stroke-width="1" stroke-linejoin="round" />
<path d="M734.9 360.8 L739.1 363.5 L742.1 366.7 L743.3 370.1 L743.3 373.5 L741.6 376.8 L739.1 379.7 L734.9 381.9Z" fill="#6a6a6a" stroke="#111" stroke-width="1.2" stroke-linejoin="round" />
<path d="M738.6 364.2 L738.6 380.2" fill="none" stroke="#111" stroke-width="1" stroke-linejoin="round" stroke-linecap="round" /><path d="M680.9 311.1 C682.6 310.6 687.6 308.5 691.0 308.2 C694.4 307.9 696.1 307.1 701.2 309.4 C706.3 311.7 715.0 316.8 721.4 322.0 C727.8 327.2 734.6 333.9 739.9 340.6 C745.2 347.4 751.1 358.9 753.4 362.5 L770.6 348.5 L770.6 347.4 C769.4 344.9 765.0 335.4 763.2 332.6 C761.4 329.8 763.0 333.7 760.0 330.5 C757.0 327.3 750.9 319.0 745.0 313.6 C739.1 308.2 731.0 301.5 724.8 298.4 C718.6 295.3 712.1 295.4 707.9 295.1 C703.7 294.8 700.9 296.4 699.5 296.7 Z" fill="url(#garch)" stroke="#111" stroke-width="1.4" stroke-linejoin="round"/>
<path d="M680.9 311.1 C682.6 310.6 687.6 308.5 691.0 308.2 C694.4 307.9 696.1 307.1 701.2 309.4 C706.3 311.7 715.0 316.8 721.4 322.0 C727.8 327.2 734.6 333.9 739.9 340.6 C745.2 347.4 751.1 358.9 753.4 362.5 Z" fill="#989898" stroke="#111" stroke-width="1.2"/>
<path d="M680.9 311.1 C682.6 310.6 687.6 308.5 691.0 308.2 C694.4 307.9 696.1 307.1 701.2 309.4 C706.3 311.7 715.0 316.8 721.4 322.0 C727.8 327.2 734.6 333.9 739.9 340.6 C745.2 347.4 751.1 358.9 753.4 362.5" fill="none" stroke="#18d018" stroke-width="2"/>
<path d="M772.4 370.4 A22.5 22.5 0 0 1 817.4 370.4 A22.5 17 0 0 1 772.4 370.4Z" fill="url(#gdome)" stroke="#111" stroke-width="1.8"/>
<path d="M787.5 349.1 C789.4 350.2 795.8 352.6 799.1 355.8 C802.4 359.0 805.7 364.3 807.5 368.5 C809.3 372.7 809.6 379.0 810.0 381.1" fill="none" stroke="#222" stroke-width="1.1"/>
<path d="M697.6 422.9 L763.2 365.3 L770.6 370.6 L770.6 387.5 L698.4 437.3Z" fill="#7e7e7e" stroke="#111" stroke-width="1.7" stroke-linejoin="round" />
<path d="M697.6 422.9 L763.2 365.3 L770.6 370.6 L703.5 426Z" fill="#a6a6a6" stroke="#111" stroke-width="1.1" stroke-linejoin="round" />
<path d="M670.7 261.7 L689.7 273.3 L689.7 293.3 L670.7 281.7Z" fill="#6e6e6e" stroke="#111" stroke-width="1.7" stroke-linejoin="round" /><path d="M689.7 273.3 L706 259.5 L706 279.5 L689.7 293.3Z" fill="#868686" stroke="#111" stroke-width="1.7" stroke-linejoin="round" /><path d="M670.7 261.7 L688.6 248.4 L706 259.5 L689.7 273.3Z" fill="#9a9a9a" stroke="#111" stroke-width="1.7" stroke-linejoin="round" />
<path d="M670.7 446.5 L689.7 456 L689.7 476 L670.7 466.5Z" fill="#6e6e6e" stroke="#111" stroke-width="1.7" stroke-linejoin="round" /><path d="M689.7 456 L706.9 446 L706.9 466 L689.7 476Z" fill="#868686" stroke="#111" stroke-width="1.7" stroke-linejoin="round" /><path d="M670.7 446.5 L688.6 433.8 L706.9 446 L689.7 456Z" fill="#9a9a9a" stroke="#111" stroke-width="1.7" stroke-linejoin="round" />
<path d="M787.5 186.3 L803.6 175.0 L830.3 193.3 L813.5 205.2Z" fill="#9a9a9a" stroke="#111" stroke-width="1.7" stroke-linejoin="round" />
<path d="M813.5 205.2 L830.3 193.3 L831.0 193.6 L831.0 224.2 L826.8 224.2 L816.3 215.8Z" fill="#9a9a9a" stroke="#111" stroke-width="1.7" stroke-linejoin="round" />
<path d="M816.3 216.0 L829.3 208.0 L829.9 224.2 L826.8 224.2Z" fill="#787878" stroke="#111" stroke-width="1" stroke-linejoin="round" />
<path d="M816.7 215.1 L828.9 206.9" fill="none" stroke="#ececec" stroke-width="2" stroke-linejoin="round" stroke-linecap="round" />
<path d="M829.0 194.0 L829.0 224.2" fill="none" stroke="#111" stroke-width="1.2" stroke-linejoin="round" stroke-linecap="round" />
<path d="M793.8 199.6 L799.4 195.4 L813.5 205.2 L805.7 210.1 L793.8 215.8Z" fill="#747474" stroke="#111" stroke-width="1.7" stroke-linejoin="round" />
<path d="M775.5 186.3 L793.8 199.6 L793.8 215.5 L776.0 204.8Z" fill="#707070" stroke="#111" stroke-width="1.7" stroke-linejoin="round" />
<path d="M775.5 186.3 L781.9 182.0 L799.4 195.4 L793.8 199.6Z" fill="#9a9a9a" stroke="#111" stroke-width="1.7" stroke-linejoin="round" />
<path d="M788.2 223.1 L805.7 234.3 L805.7 242.7 L788.2 230.1Z" fill="#5c5c5c" stroke="#111" stroke-width="1.7" stroke-linejoin="round" />
<path d="M805.7 234.3 L824.0 223.9 L824.0 229.8 L805.7 242.7Z" fill="#868686" stroke="#111" stroke-width="1.7" stroke-linejoin="round" />
<path d="M788.2 222.5 L805.7 210.1 L824.0 223.5 L805.7 234.0Z" fill="#8a8a8a" stroke="#111" stroke-width="2.6" stroke-linejoin="round" />
<path d="M805.7 210.1 L824.0 223.5 L805.7 222.1Z" fill="#a0a0a0" stroke="none" stroke-width="0" stroke-linejoin="round" />
<path d="M788.2 222.5 L805.7 222.1 L805.7 234.0Z" fill="#6e6e6e" stroke="none" stroke-width="0" stroke-linejoin="round" />
<path d="M788.2 222.5 L824.0 223.5" fill="none" stroke="#111" stroke-width="2.4" stroke-linejoin="round" stroke-linecap="round" />
<path d="M805.7 210.1 L805.7 234.0" fill="none" stroke="#111" stroke-width="2.4" stroke-linejoin="round" stroke-linecap="round" />
<path d="M788.2 222.5 L805.7 210.1 L824.0 223.5 L805.7 234.0Z" fill="none" stroke="#111" stroke-width="2.6" stroke-linejoin="round" />
<path d="M786.4 503.2 L804.3 492.7 L822.3 505.3 L805.4 516.9Z" fill="#8a8a8a" stroke="#111" stroke-width="2" stroke-linejoin="round" />
<path d="M786.4 503.2 L792.7 507.4 L792.7 512.7 L786.4 509.5Z" fill="#5c5c5c" stroke="#111" stroke-width="1.7" stroke-linejoin="round" />
<path d="M786.4 503.2 L822.3 505.3" fill="none" stroke="#111" stroke-width="2" stroke-linejoin="round" stroke-linecap="round" />
<path d="M804.3 492.7 L805.4 516.9" fill="none" stroke="#111" stroke-width="2" stroke-linejoin="round" stroke-linecap="round" />
<path d="M805.4 516.9 L822.3 505.3 L822.3 510.6 L809.6 520.1Z" fill="#6a6a6a" stroke="#111" stroke-width="1" stroke-linejoin="round" />
<path d="M751.6 220.6 L766.4 211.1 L766.4 231.1Z" fill="#8e8e8e" stroke="#111" stroke-width="1.1" stroke-linejoin="round" />
<path d="M766.4 211.1 L781.2 220.6 L766.4 231.1Z" fill="#6c6c6c" stroke="#111" stroke-width="1.1" stroke-linejoin="round" />
<path d="M734.8 232.2 L747.4 224.4 L746.4 240.6Z" fill="#8e8e8e" stroke="#111" stroke-width="1.1" stroke-linejoin="round" />
<path d="M747.4 224.4 L758.0 232.2 L746.4 240.6Z" fill="#6c6c6c" stroke="#111" stroke-width="1.1" stroke-linejoin="round" />
<path d="M722.1 241.7 L731.6 236.4 L730.6 246.3Z" fill="#8e8e8e" stroke="#111" stroke-width="1.1" stroke-linejoin="round" />
<path d="M731.6 236.4 L738.4 241.7 L730.6 246.3Z" fill="#6c6c6c" stroke="#111" stroke-width="1.1" stroke-linejoin="round" />
<path d="M711.6 249.0 L717.9 245.5 L716.4 253.3Z" fill="#8e8e8e" stroke="#111" stroke-width="1.1" stroke-linejoin="round" />
<path d="M717.9 245.5 L722.8 249.7 L716.4 253.3Z" fill="#6c6c6c" stroke="#111" stroke-width="1.1" stroke-linejoin="round" />
<path d="M702.1 255.4 L706.3 253.3 L705.3 259.6Z" fill="#8e8e8e" stroke="#111" stroke-width="1.1" stroke-linejoin="round" />
<path d="M706.3 253.3 L710.1 256.4 L705.3 259.6Z" fill="#6c6c6c" stroke="#111" stroke-width="1.1" stroke-linejoin="round" />
<ellipse cx="723.2" cy="265.9" rx="9.5" ry="6.7" fill="url(#gcurv)" stroke="#111" stroke-width="1.3" transform="rotate(-20 723.2 265.9)"/>
<ellipse cx="739.0" cy="255.4" rx="7.6" ry="5.5" fill="url(#gcurv)" stroke="#111" stroke-width="1.3" transform="rotate(-20 739.0 255.4)"/>
<ellipse cx="752.7" cy="246.9" rx="5.5" ry="4.0" fill="url(#gcurv)" stroke="#111" stroke-width="1.3" transform="rotate(-20 752.7 246.9)"/>
<ellipse cx="762.2" cy="241.2" rx="3.8" ry="2.7" fill="url(#gcurv)" stroke="#111" stroke-width="1.3" transform="rotate(-20 762.2 241.2)"/>
<ellipse cx="771.2" cy="237.5" rx="2.5" ry="1.9" fill="url(#gcurv)" stroke="#111" stroke-width="1.3" transform="rotate(-20 771.2 237.5)"/>
<path d="M774.2 233.2 L778.0 232.4 L776.3 235.8Z" fill="#333" stroke="#111" stroke-width="0.8" stroke-linejoin="round" />
<path d="M843.6 250.3 L856.2 262.9 L856.2 351.4 L854.5 361.5 L849.4 370.3 L843.6 374.1Z" fill="#8c8c8c" stroke="#111" stroke-width="1.5" stroke-linejoin="round" />
<path d="M853.2 265.4 L853.2 351.4" fill="none" stroke="#111" stroke-width="1" stroke-linejoin="round" stroke-linecap="round" />
<path d="M825.4 355.9 C828.5 355.9 839.9 356.4 844.3 355.9 C848.7 355.4 850.1 354.1 851.9 352.7 C853.7 351.3 854.7 348.5 855.2 347.6" fill="none" stroke="#e2e2e2" stroke-width="1.5"/>
<path d="M844.3 389.3 L851.9 391.8 L856.2 399.4 L856.4 481.1 L843.3 489.5 L843.3 482.1Z" fill="#8c8c8c" stroke="#111" stroke-width="1.5" stroke-linejoin="round" />
<path d="M854.9 398.0 L854.9 482.1" fill="none" stroke="#111" stroke-width="1" stroke-linejoin="round" stroke-linecap="round" />
<path d="M817.8 242.7 L843.6 242.7 L843.6 260.4 L817.8 260.4Z" fill="#9a9a9a" stroke="#111" stroke-width="1.5" stroke-linejoin="round" />
<path d="M817.8 260.4 L843.6 260.4 L843.6 278.1 L817.8 278.1Z" fill="#9a9a9a" stroke="#111" stroke-width="1.5" stroke-linejoin="round" />
<path d="M818.0 375.2 L843.3 375.2 L843.3 391.7 L818.0 391.7Z" fill="#9a9a9a" stroke="#111" stroke-width="1.5" stroke-linejoin="round" />
<path d="M818.0 391.7 L843.3 391.7 L843.3 409.6 L818.0 409.6Z" fill="#9a9a9a" stroke="#111" stroke-width="1.5" stroke-linejoin="round" />
<path d="M818.0 317.9 L843.3 317.9 L843.3 333.1 L818.0 333.1Z" fill="#9a9a9a" stroke="#111" stroke-width="1.5" stroke-linejoin="round" />
<path d="M818.0 333.1 L843.3 333.1 L843.3 351.6 L818.0 351.6Z" fill="#9a9a9a" stroke="#111" stroke-width="1.5" stroke-linejoin="round" />
<path d="M824.8 354.8 L843.3 354.8 L843.3 373.1 L824.8 373.1Z" fill="#9a9a9a" stroke="#111" stroke-width="1.5" stroke-linejoin="round" />
<path d="M825.6 356.3 L843.3 356.3" fill="none" stroke="#f0f0f0" stroke-width="1.6" stroke-linejoin="round" stroke-linecap="round" />
<path d="M818.0 446.5 L843.3 446.5 L843.3 470.1 L818.0 470.1Z" fill="#9a9a9a" stroke="#111" stroke-width="1.5" stroke-linejoin="round" />
<path d="M818.0 449.0 L843.3 449.0 L843.3 465.3 L818.0 465.3Z" fill="#9a9a9a" stroke="#111" stroke-width="1.5" stroke-linejoin="round" />
<path d="M818.0 465.3 L843.3 465.3 L843.3 482.1 L818.0 482.1Z" fill="#9a9a9a" stroke="#111" stroke-width="1.5" stroke-linejoin="round" />
<path d="M816.5 284.4 L824.1 276.8 L850.7 293.3 L850.7 300.8 L836.8 308.4 L850.7 314.7 L850.7 322.3 L843.1 325.6 L816.5 309.7 L817.3 304.6 L830.4 298.3 L816.5 289.5Z" fill="#9a9a9a" stroke="#111" stroke-width="1.5" stroke-linejoin="round" />
<path d="M816.5 284.4 L830.4 293.3 L830.4 298.3 L816.5 289.5Z" fill="#6c6c6c" stroke="#111" stroke-width="1" stroke-linejoin="round" />
<path d="M836.8 308.4 L850.7 300.8 L850.7 293.3 L836.8 302.1Z" fill="#6c6c6c" stroke="#111" stroke-width="1" stroke-linejoin="round" />
<path d="M817.3 304.6 L836.8 316.0 L843.1 325.6 L816.5 309.7Z" fill="#6c6c6c" stroke="#111" stroke-width="1" stroke-linejoin="round" />
<path d="M843.1 319.8 L850.7 314.7 L850.7 322.3 L843.1 325.6Z" fill="#7a7a7a" stroke="#111" stroke-width="1" stroke-linejoin="round" />
<path d="M819.1 415.9 L826.5 410.6 L849.7 423.3 L849.7 431.7 L834.9 439.1 L843.3 446.5 L818.0 446.5 L811.7 443.3 L811.7 438.0 L826.5 428.6 L819.1 421.2Z" fill="#9a9a9a" stroke="#111" stroke-width="1.5" stroke-linejoin="round" />
<path d="M819.1 415.9 L830.7 423.3 L826.5 428.6 L819.1 421.2Z" fill="#6c6c6c" stroke="#111" stroke-width="1" stroke-linejoin="round" />
<path d="M831.7 434.9 L849.7 423.3 L849.7 431.7 L834.9 439.1Z" fill="#6c6c6c" stroke="#111" stroke-width="1" stroke-linejoin="round" />
<path d="M811.7 438.0 L818.0 446.5 L811.7 443.3Z" fill="#5c5c5c" stroke="#111" stroke-width="1" stroke-linejoin="round" />
<path d="M711.6 486.3 C713.9 485.0 720.2 479.1 725.3 478.5 C730.4 477.9 737.1 480.6 742.2 482.8 C747.3 485.0 751.7 488.7 755.9 491.6 C760.1 494.5 765.6 498.7 767.5 500.1 L774.8 519.0 L764.3 525.3 Z" fill="url(#gramp)" stroke="#111" stroke-width="1.4" stroke-linejoin="round"/>
<path d="M755.9 505.3 L767.5 500.1 L774.8 519.0 L764.3 525.3Z" fill="#b4b4b4" stroke="#111" stroke-width="1.2" stroke-linejoin="round" />
<path d="M775.9 520.1 L782.2 523.2 L794.9 550.6 L775.9 539.0Z" fill="#5e5e5e" stroke="#111" stroke-width="1.3" stroke-linejoin="round" />
<path d="M775.9 520.1 L795.9 508.5 L797.0 510.6 L782.2 523.2Z" fill="#8a8a8a" stroke="#111" stroke-width="1.2" stroke-linejoin="round" />
<path d="M782.2 523.2 L797.0 510.6 L812.8 539.0 L794.9 550.6Z" fill="#b0b0b0" stroke="#111" stroke-width="1.3" stroke-linejoin="round" />
<path d="M600.0 332.2 L648.9 295.1 L656.5 301.0 L606.7 340.6Z" fill="#7c7c7c" stroke="#111" stroke-width="1.4" stroke-linejoin="round" />
<path d="M648.9 295.1 L656.5 301.0 L650.6 306.0 L648.9 305.2Z" fill="#a8a8a8" stroke="#111" stroke-width="1" stroke-linejoin="round" />
<path d="M603.4 340.6 L663.2 306.0 L667.4 307.7 L608.4 344.0Z" fill="#7c7c7c" stroke="#111" stroke-width="1.3" stroke-linejoin="round" />
<path d="M614.3 334.3 L614.3 340.7" fill="none" stroke="#111" stroke-width="1.4" stroke-linejoin="round" stroke-linecap="round" />
<path d="M623.6 328.9 L623.6 335.3" fill="none" stroke="#111" stroke-width="1.4" stroke-linejoin="round" stroke-linecap="round" />
<path d="M633.7 323.1 L633.7 329.5" fill="none" stroke="#111" stroke-width="1.4" stroke-linejoin="round" stroke-linecap="round" />
<path d="M643.8 317.2 L643.8 323.6" fill="none" stroke="#111" stroke-width="1.4" stroke-linejoin="round" stroke-linecap="round" />
<path d="M654.0 311.4 L654.0 317.8" fill="none" stroke="#111" stroke-width="1.4" stroke-linejoin="round" stroke-linecap="round" />
<path d="M557.2 350.2 L566.4 344.6 L566.4 355.1 L581.8 365.7 L576.2 369.5 L558.6 357.2Z" fill="#8a8a8a" stroke="#111" stroke-width="1.2" stroke-linejoin="round" />
<path d="M558.2 351.2 L581.8 366.6" fill="none" stroke="#ececec" stroke-width="1.6" stroke-linejoin="round" stroke-linecap="round" />
<path d="M560.7 356.8 L576.2 367.1" fill="none" stroke="#e0e0e0" stroke-width="1.2" stroke-linejoin="round" stroke-linecap="round" />
<path d="M566.4 331.2 L593.8 349.5 L596.6 353.7 L593.1 357.9 L581.8 365.7 L566.4 355.1Z" fill="#747474" stroke="#111" stroke-width="1.7" stroke-linejoin="round" />
<path d="M567.1 376.9 L576.9 383.2 L576.9 402.9 L567.1 395.9Z" fill="#6c6c6c" stroke="#111" stroke-width="1.7" stroke-linejoin="round" />
<path d="M576.9 383.2 L604.3 364.3 Q610.6 359.3 609.9 351.6 L611.6 366.4 Q611.3 377.6 604.3 383.2 L576.9 402.9Z" fill="url(#gbent)" stroke="#111" stroke-width="1.6" stroke-linejoin="round"/>
<path d="M604.3 364.7 L604.3 383.2" fill="none" stroke="#111" stroke-width="1.1" stroke-linejoin="round" stroke-linecap="round" />
<path d="M566.4 331.2 L576.9 322.8 L602.9 341.1 Q611.3 348.1 609.9 356.5 Q608.5 361.5 604.3 364.3 L576.9 383.2 L567.1 376.9 L593.1 357.9 Q598.7 353.7 593.8 349.5Z" fill="#a4a4a4" stroke="#111" stroke-width="1.6" stroke-linejoin="round"/>
<circle cx="558.6" cy="380.7" r="3.4" fill="#8a8aa2" stroke="#333" stroke-width="1.2"/>
<path d="M590.6 391.7 L594.4 393.0 L594.4 409.9 L590.6 408.5Z" fill="#333" stroke="#111" stroke-width="1.2" stroke-linejoin="round" />
<path d="M596.3 394.8 L600.1 396.2 L600.1 413.0 L596.3 411.7Z" fill="#555" stroke="#111" stroke-width="1.2" stroke-linejoin="round" />
<path d="M606.4 390.6 A6.3 6.3 0 0 1 619.0 390.6 V403.2 A6.3 3.2 0 0 1 606.4 403.2Z" fill="url(#gcyl)" stroke="#111" stroke-width="1.1"/>
<path d="M621.2 399.0 A4.2 4.2 0 0 1 629.6 399.0 V408.5 A4.2 2.1 0 0 1 621.2 408.5Z" fill="url(#gcyl)" stroke="#111" stroke-width="1.1"/>
<path d="M633.4 405.4 A3.0 3.0 0 0 1 639.4 405.4 V414.9 A3.0 1.5 0 0 1 633.4 414.9Z" fill="url(#gcyl)" stroke="#111" stroke-width="1.1"/>
<path d="M643.3 410.6 A2.1 2.1 0 0 1 647.5 410.6 V420.1 A2.1 1.1 0 0 1 643.3 420.1Z" fill="url(#gcyl)" stroke="#111" stroke-width="1.1"/>
<path d="M604.3 401.2 L607.2 403.2 L607.2 419.0094435075885 L604.3 417.0094435075885Z" fill="#707070" stroke="#111" stroke-width="1.2" stroke-linejoin="round" />
<path d="M607.2 403.2 L610.6 401.2 L610.6 417.0094435075885 L607.2 419.0094435075885Z" fill="#8a8a8a" stroke="#111" stroke-width="1.2" stroke-linejoin="round" />
<path d="M604.3 401.2 L607.8 398.9 L610.6 401.2 L607.2 403.2Z" fill="#a0a0a0" stroke="#111" stroke-width="1.2" stroke-linejoin="round" />
<path d="M615.9 408.5 L619.9 411.4 L619.9 428.2634064080944 L615.9 425.3634064080944Z" fill="#707070" stroke="#111" stroke-width="1.2" stroke-linejoin="round" />
<path d="M619.9 411.4 L624.8 408.5 L624.8 425.3634064080944 L619.9 428.2634064080944Z" fill="#8a8a8a" stroke="#111" stroke-width="1.2" stroke-linejoin="round" />
<path d="M615.9 408.5 L620.8 405.4 L624.8 408.5 L619.9 411.4Z" fill="#a0a0a0" stroke="#111" stroke-width="1.2" stroke-linejoin="round" />
<path d="M628.6 418.0 L634.1 421.9 L634.1 441.92529510961214 L628.6 438.02529510961216Z" fill="#707070" stroke="#111" stroke-width="1.2" stroke-linejoin="round" />
<path d="M634.1 421.9 L640.8 418.0 L640.8 438.02529510961216 L634.1 441.92529510961214Z" fill="#8a8a8a" stroke="#111" stroke-width="1.2" stroke-linejoin="round" />
<path d="M628.6 418.0 L635.3 413.7 L640.8 418.0 L634.1 421.9Z" fill="#a0a0a0" stroke="#111" stroke-width="1.2" stroke-linejoin="round" />
<path d="M642.3 428.6 L651.7 435.3 L651.7 455.32529510961217 L642.3 448.6252951096122Z" fill="#707070" stroke="#111" stroke-width="1.2" stroke-linejoin="round" />
<path d="M651.7 435.3 L663.3 428.6 L663.3 448.6252951096122 L651.7 455.32529510961217Z" fill="#8a8a8a" stroke="#111" stroke-width="1.2" stroke-linejoin="round" />
<path d="M642.3 428.6 L653.9 421.2 L663.3 428.6 L651.7 435.3Z" fill="#a0a0a0" stroke="#111" stroke-width="1.2" stroke-linejoin="round" /><g><path d="M1308.500 626v-13" stroke="#1818a0" stroke-width="2"/><path d="M1306 615l2.500-8.500l2.500 8.500z" fill="#1818a0"/><path d="M1308.500 625.500l8-4.500" stroke="#188018" stroke-width="1.600"/><path d="M1314.500 619.500l5.500-1.500l-3 4.500z" fill="#188018"/><path d="M1308.500 625.500l12 8.500" stroke="#8a1c1c" stroke-width="1.600"/><path d="M1319.500 630.500l5 6.500l-8-2.500z" fill="#8a1c1c"/>
<text x="1310.500" y="609" font-size="9" font-family="Liberation Sans, sans-serif" fill="#000">Z</text><text x="1321.500" y="618" font-size="9" font-family="Liberation Sans, sans-serif" fill="#000">Y</text><text x="1325" y="638" font-size="9" font-family="Liberation Sans, sans-serif" fill="#000">X</text></g></svg></div><!--view-->
<div id="tabbar3d"><svg class="abs" style="left:0;top:0" width="1068" height="33" viewBox="270 654 1068 33">
<path d="M270.500 654v28q0 4 4 4h96q4 0 4-4v-28z" fill="#fff" stroke="#b2b2b2"/>
<g transform="translate(278 663) scale(1)"><path d="M0 0h7.500v3h-3.800v2.300h2.800v2.700h-2.800v5h-3.700z" fill="#f01818"/><g fill="#1838a8"><circle cx="9.500" cy="8.500" r="3.800"/><g stroke="#1838a8" stroke-width="1.800"><path d="M9.500 3v11M4 8.500h11M5.600 4.600l7.800 7.800M13.400 4.600l-7.800 7.800"/></g></g><circle cx="9.500" cy="8.500" r="1.700" fill="#fff"/></g>
<text x="301" y="675" font-size="13.500" fill="#444" textLength="38.500" lengthAdjust="spacingAndGlyphs" font-family="Liberation Sans, sans-serif">123 : 1</text>
<path d="M352 666l10 10M362 666l-10 10" stroke="#555" stroke-width="3.600" stroke-linecap="round"/>
</svg></div>
<div id="term">
  <div id="termtitle"><div class="t">live@live-VirtualBox:/home/live</div><svg class="abs" style="left:0;top:0" width="658" height="24" viewBox="923 155 658 24">
<defs><linearGradient id="gbtn" x1="0" y1="0" x2="0" y2="1"><stop offset="0" stop-color="#ffffff"/><stop offset="1" stop-color="#ececec"/></linearGradient><linearGradient id="gcls" x1="0" y1="0" x2="0" y2="1"><stop offset="0" stop-color="#f08080"/><stop offset=".5" stop-color="#e85058"/><stop offset="1" stop-color="#e04048"/></linearGradient></defs>
<path d="M932 162h13l-6.500 5.500z" fill="#a0a0a0"/>
<path d="M1458.500 154.500v15q0 2 2 2h35q2 0 2-2v-15z" fill="url(#gbtn)" stroke="#a8a8a8"/>
<path d="M1497.500 154.500v15q0 2 2 2h35q2 0 2-2v-15z" fill="url(#gbtn)" stroke="#a8a8a8"/>
<path d="M1536.500 154.500v15q0 2 2 2h34q2 0 2-2v-15z" fill="url(#gcls)" stroke="#c03038"/>
<rect x="1473.500" y="164.500" width="9" height="3" fill="#fafafa" stroke="#909090"/>
<rect x="1511.500" y="158.500" width="10" height="9" fill="#fafafa" stroke="#909090"/><rect x="1514.500" y="161.500" width="4" height="3" fill="#fff" stroke="#909090"/>
<path d="M1551 159l9 8M1560 159l-9 8" stroke="#b02830" stroke-width="4"/><path d="M1551 159l9 8M1560 159l-9 8" stroke="#fff" stroke-width="2.400"/>
</svg></div>
  <div id="termmenu">
    <span style="left:9px">Файл</span>
    <span style="left:57px">Правка</span>
    <span style="left:117px">Вид</span>
    <span style="left:156px">Поиск</span>
    <span style="left:209px">Терминал</span>
    <span style="left:285px">Справка</span>
  </div>
  <div id="termbody"><b>live@live-VirtualBox</b> <span class="c">~ $</span> uname -a
Linux live-VirtualBox 4.1.25-nrj-desktop-1rosa-x86_64 #1 SMP PREEMPT Tue May 24
16:25:10 UTC 2016 x86_64 x86_64 x86_64 GNU/Linux
<b>live@live-VirtualBox</b> <span class="c">~ $</span> <span style="background:#d3d7cf"> </span></div><div class="abs" style="left:644px;top:59px;width:12px;height:332px;background:#4878a4"></div><svg class="abs" style="left:644px;top:44px" width="12" height="362" viewBox="0 0 12 362"><path d="M6 4l2.600 5h-5.200z M6 358l2.600-5h-5.200z" fill="#555" stroke="#ccc" stroke-width=".8"/><path d="M4 178.500h5M4 180.500h5M4 182.500h5" stroke="#8aa8c8" stroke-width=".8"/></svg>
</div>
<div id="task"><svg class="abs" style="left:0;top:0" width="1601" height="25" viewBox="0 687 1601 25">
<defs><radialGradient id="gglobe" cx=".45" cy=".3" r=".75"><stop offset="0" stop-color="#2a78d0"/><stop offset=".55" stop-color="#103c94"/><stop offset="1" stop-color="#06123c"/></radialGradient><linearGradient id="gros" x1="0" y1="0" x2="1" y2="0"><stop offset="0" stop-color="#153a74"/><stop offset=".5" stop-color="#2a5c9c"/><stop offset="1" stop-color="#5688c0"/></linearGradient></defs>
<rect x="0" y="711" width="1601" height="1" fill="#a3b3a3"/>
<circle cx="11" cy="699.500" r="11.800" fill="url(#gros)"/><path d="M11.500 693.500a6.500 6.500 0 1 0 6.400 5.500l1.600-8.500z" fill="#f0f6fc"/><path d="M17 694l3-6l3 6.500z" fill="#7c7c7c"/><rect x="38" y="687" width="11" height="3" fill="#6ab84a"/><rect x="39" y="689" width="6" height="8" fill="#f8f8f8"/><rect x="31.500" y="687.500" width="6.500" height="7" fill="#f0c828" stroke="#b89418" stroke-width=".5"/><rect x="42.500" y="690.500" width="9.500" height="7" fill="#9a5a28" stroke="#6a3c18" stroke-width=".5"/><rect x="45" y="691.500" width="4.500" height="5" fill="#6ab0f0"/><path d="M30.500 695.500h8l1.500 1.500h12.500v11.500h-22z" fill="#6aaaea" stroke="#4a88cc" stroke-width=".7"/><path d="M31 698.500h21" stroke="#a8d0f8" stroke-width="1"/><rect x="30.500" y="707.500" width="22" height="2" fill="#fafafa" stroke="#b8b8b8" stroke-width=".4"/><rect x="61.500" y="687.500" width="20" height="22.500" rx="1.500" fill="#7cb8f0" stroke="#5a98d8" stroke-width=".8"/><rect x="65" y="707.300" width="13" height="1.800" rx=".9" fill="#f4f8fc"/><path d="M66.200 703.800l1.800-5.200l7.400-7.400l3.200 3.200l-7.400 7.400z" fill="none" stroke="#fff" stroke-width="1.300" stroke-linejoin="round"/><path d="M66.200 703.800l1-3l2 2z" fill="#fff"/><path d="M73.700 692.900l3.200 3.200" stroke="#fff" stroke-width="1"/><circle cx="100.800" cy="699" r="11.200" fill="url(#gglobe)"/><path d="M93 694q3-5 9-5q5 1 7 5q-2 3-5 2q-2 4-5 3q-3-4-6-5zM96 703q3-1 5 2q-1 3-4 2zM105 700q3-1 5 1q-1 4-4 5z" fill="#2a9ae0" opacity=".75"/><path d="M122 696.500h4M122 699.500h4M122 702.500h4" stroke="#aaa"/><rect x="130.500" y="688.500" width="197" height="21" rx="3" fill="#fdfdfd" stroke="#c0c0c0"/>
<g transform="translate(138 692) scale(1)"><path d="M0 0h7.500v3h-3.800v2.300h2.800v2.700h-2.800v5h-3.700z" fill="#f01818"/><g fill="#1838a8"><circle cx="9.500" cy="8.500" r="3.800"/><g stroke="#1838a8" stroke-width="1.800"><path d="M9.500 3v11M4 8.500h11M5.600 4.600l7.800 7.800M13.400 4.600l-7.800 7.800"/></g></g><circle cx="9.500" cy="8.500" r="1.700" fill="#fff"/></g>
<text x="161.800" y="703.200" font-size="14" fill="#444" textLength="48.500" lengthAdjust="spacingAndGlyphs" font-family="Liberation Sans, sans-serif">FreeCAD</text>
<linearGradient id="gtb" x1="0" y1="0" x2="0" y2="1"><stop offset="0" stop-color="#d8d8d8"/><stop offset="1" stop-color="#bcbcbc"/></linearGradient><rect x="331" y="688.500" width="197.500" height="21" rx="3" fill="url(#gtb)" stroke="#8a8a8a"/>
<rect x="339.500" y="693.500" width="14" height="12" fill="#222" stroke="#999"/><path d="M342 697l3 2l-3 2M346 702h4" stroke="#fff" stroke-width="1" fill="none"/>
<text x="362" y="703.700" font-size="14" fill="#444" textLength="158.800" lengthAdjust="spacingAndGlyphs" font-family="Liberation Sans, sans-serif">live@live-VirtualBox:/hom...</text>
<rect x="1520.500" y="690.500" width="21" height="18" fill="#5a9ae0" stroke="#a8a8a8" stroke-width="1.400"/><path d="M1521 707h21v2h-21z" fill="#b8b8b8"/><path d="M1528 689v9M1524 693.500h9M1525 701v7M1521.500 704.500h7" stroke="#f8c8ff" stroke-width="1.200"/><path d="M1531 694l4 6" stroke="#b050e0" stroke-width="2.400"/><path d="M1535 700l8 10" stroke="#333" stroke-width="2.400"/>
<path d="M1547 696.500h4M1547 699.500h4M1547 702.500h4" stroke="#999"/>
<g fill="none" stroke="#d01818" stroke-width="3"><path d="M1559.500 703a7 7 0 0 1 11-8.500"/><path d="M1573 695a7 7 0 0 1 -11 8.500"/></g><g fill="#d01818"><path d="M1555 697l7.500 1.500l-5.500 6z"/><path d="M1577.500 701l-7.500-1.500l5.500-6z"/></g><rect x="1582.500" y="690.500" width="17" height="18.500" fill="#fbd070" stroke="#f08020" stroke-width="1.400"/><rect x="1585" y="692" width="12" height="14.500" fill="#e4ecfc"/><path d="M1587 692l2-4h5l2 4z" fill="#30a830"/>
<text x="1586.500" y="705" font-size="15" fill="#000" font-family="Liberation Sans, sans-serif">P</text>
</svg></div>
</body>
</html>
